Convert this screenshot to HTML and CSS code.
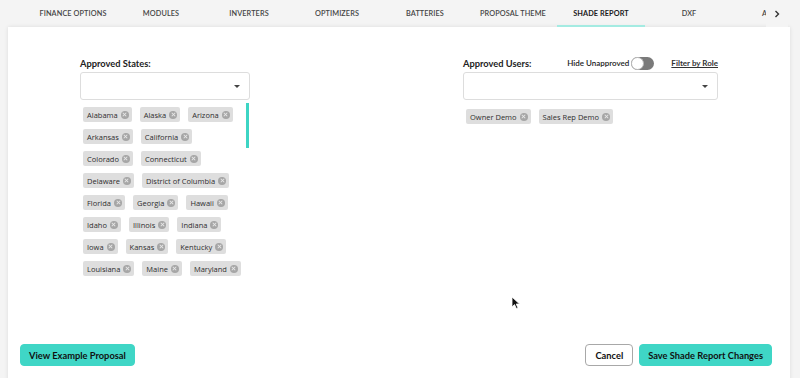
FILE: index.html
```html
<!DOCTYPE html>
<html>
<head>
<meta charset="utf-8">
<link rel="stylesheet" href="styles.css">
</head>
<body>
<nav class="tabs">
  <div class="tab">FINANCE OPTIONS</div>
  <div class="tab">MODULES</div>
  <div class="tab">INVERTERS</div>
  <div class="tab">OPTIMIZERS</div>
  <div class="tab">BATTERIES</div>
  <div class="tab">PROPOSAL THEME</div>
  <div class="tab active">SHADE REPORT</div>
  <div class="tab">DXF</div>
  <div class="tab clipped">APPS</div>
  <div class="tab-arrow"><svg width="8" height="8" viewBox="0 0 8 8"><path d="M2.5 1 L5.5 4 L2.5 7" fill="none" stroke="#333" stroke-width="1.4"/></svg></div>
</nav>
<main class="card">
  <section class="content">
    <div class="col">
      <div class="label-row"><span class="label">Approved States:</span></div>
      <div class="select"><span class="caret"></span></div>
      <div class="scroll-wrap">
        <div class="chips scroll">
          <span class="chip">Alabama<i class="x"></i></span>
          <span class="chip">Alaska<i class="x"></i></span>
          <span class="chip">Arizona<i class="x"></i></span>
          <span class="chip">Arkansas<i class="x"></i></span>
          <span class="chip">California<i class="x"></i></span>
          <span class="chip">Colorado<i class="x"></i></span>
          <span class="chip">Connecticut<i class="x"></i></span>
          <span class="chip">Delaware<i class="x"></i></span>
          <span class="chip">District of Columbia<i class="x"></i></span>
          <span class="chip">Florida<i class="x"></i></span>
          <span class="chip">Georgia<i class="x"></i></span>
          <span class="chip">Hawaii<i class="x"></i></span>
          <span class="chip">Idaho<i class="x"></i></span>
          <span class="chip">Illinois<i class="x"></i></span>
          <span class="chip">Indiana<i class="x"></i></span>
          <span class="chip">Iowa<i class="x"></i></span>
          <span class="chip">Kansas<i class="x"></i></span>
          <span class="chip">Kentucky<i class="x"></i></span>
          <span class="chip">Louisiana<i class="x"></i></span>
          <span class="chip">Maine<i class="x"></i></span>
          <span class="chip">Maryland<i class="x"></i></span>
          <span class="chip">Massachusetts<i class="x"></i></span>
          <span class="chip">Michigan<i class="x"></i></span>
          <span class="chip">Minnesota<i class="x"></i></span>
          <span class="chip">Mississippi<i class="x"></i></span>
          <span class="chip">Missouri<i class="x"></i></span>
          <span class="chip">Montana<i class="x"></i></span>
          <span class="chip">Nebraska<i class="x"></i></span>
          <span class="chip">Nevada<i class="x"></i></span>
          <span class="chip">New Hampshire<i class="x"></i></span>
          <span class="chip">New Jersey<i class="x"></i></span>
          <span class="chip">New Mexico<i class="x"></i></span>
          <span class="chip">New York<i class="x"></i></span>
          <span class="chip">North Carolina<i class="x"></i></span>
          <span class="chip">North Dakota<i class="x"></i></span>
          <span class="chip">Ohio<i class="x"></i></span>
          <span class="chip">Oklahoma<i class="x"></i></span>
          <span class="chip">Oregon<i class="x"></i></span>
          <span class="chip">Pennsylvania<i class="x"></i></span>
          <span class="chip">Rhode Island<i class="x"></i></span>
          <span class="chip">South Carolina<i class="x"></i></span>
          <span class="chip">South Dakota<i class="x"></i></span>
          <span class="chip">Tennessee<i class="x"></i></span>
          <span class="chip">Texas<i class="x"></i></span>
          <span class="chip">Utah<i class="x"></i></span>
          <span class="chip">Vermont<i class="x"></i></span>
          <span class="chip">Virginia<i class="x"></i></span>
          <span class="chip">Washington<i class="x"></i></span>
          <span class="chip">West Virginia<i class="x"></i></span>
          <span class="chip">Wisconsin<i class="x"></i></span>
          <span class="chip">Wyoming<i class="x"></i></span>
        </div>
        <span class="thumb"></span>
      </div>
    </div>
    <div class="spacer"></div>
    <div class="col">
      <div class="label-row">
        <span class="label">Approved Users:</span>
        <span class="hide">Hide Unapproved <span class="toggle"><span class="knob"></span></span></span>
        <a class="filter">Filter by Role</a>
      </div>
      <div class="select"><span class="caret"></span></div>
      <div class="chips users">
        <span class="chip">Owner Demo<i class="x"></i></span>
        <span class="chip">Sales Rep Demo<i class="x"></i></span>
      </div>
    </div>
  </section>
  <footer class="footer">
    <button class="btn primary">View Example Proposal</button>
    <div class="actions">
      <button class="btn outline">Cancel</button>
      <button class="btn primary">Save Shade Report Changes</button>
    </div>
  </footer>
</main>
<svg class="cursor" width="10" height="14" viewBox="0 0 10 14"><path d="M1 1 L1 11 L3.5 8.6 L5.4 12.6 L7 11.9 L5.2 8 L8.6 8 Z" fill="#111" stroke="#fff" stroke-width="0.8"/></svg>
</body>
</html>
```
FILE: styles.css
```css
* { box-sizing: border-box; }
html, body { margin: 0; padding: 0; }
body {
  width: 800px;
  height: 378px;
  overflow: hidden;
  background: #f4f4f4;
  font-family: "Lato", "Liberation Sans", sans-serif;
  color: #222;
  position: relative;
}
.tabs {
  display: flex;
  height: 27px;
  padding-left: 29px;
  align-items: stretch;
  overflow: hidden;
}
.tab {
  width: 88px;
  flex: none;
  display: flex;
  align-items: center;
  justify-content: center;
  font-size: 7.3px;
  font-weight: 600;
  color: #444;
  letter-spacing: 0.1px;
  border-bottom: 2px solid transparent;
  padding-top: 1px;
  white-space: nowrap;
}
.tab.active {
  color: #1a1a1a;
  font-weight: 700;
  border-bottom-color: #a4ebe2;
}
.tab.clipped {
  width: 33px;
  justify-content: flex-start;
  padding-left: 29px;
  overflow: hidden;
}
.tab-arrow {
  width: 22px;
  flex: none;
  display: flex;
  align-items: center;
  justify-content: center;
  background: #f4f4f4;
}
.card {
  margin: 0 10px 0 8px;
  height: 360px;
  background: #fff;
  box-shadow: 0 0 4px rgba(0,0,0,0.10);
  display: flex;
  flex-direction: column;
}
.content {
  display: grid;
  grid-template-columns: 170px 1fr 255px;
  padding: 28px 72px 0 72px;
}
.col { display: flex; flex-direction: column; }
.label-row {
  display: flex;
  align-items: center;
  height: 16px;
  margin-bottom: 1px;
}
.label {
  font-size: 9.3px;
  font-weight: 700;
  color: #222;
}
.hide {
  margin-left: auto;
  margin-right: 2px;
  font-size: 8px;
  font-weight: 600;
  display: flex;
  align-items: center;
  gap: 2px;
}
.toggle {
  width: 23px;
  height: 13px;
  border-radius: 7px;
  background: #7a7a7a;
  position: relative;
  display: inline-block;
}
.knob {
  position: absolute;
  left: 0;
  top: 0;
  width: 13px;
  height: 13px;
  border-radius: 50%;
  background: #fff;
  border: 1px solid #bbb;
}
.filter {
  margin-left: 15px;
  font-size: 8px;
  font-weight: 700;
  text-decoration: underline;
  color: #333;
}
.select {
  height: 28px;
  border: 1px solid #ddd;
  border-radius: 3px;
  position: relative;
}
.caret {
  position: absolute;
  right: 9px;
  top: 12px;
  border-left: 3px solid transparent;
  border-right: 3px solid transparent;
  border-top: 3px solid #444;
}
.scroll-wrap {
  position: relative;
  margin-top: 3px;
}
.thumb {
  position: absolute;
  right: 1px;
  top: 0;
  width: 3px;
  height: 45px;
  background: #3dd5c4;
}
.chips {
  display: flex;
  flex-wrap: wrap;
  align-content: flex-start;
  gap: 7px 8px;
  padding: 4px 6px 0 3px;
}
.chips.scroll {
  height: 177px;
  overflow: hidden;
}
.chips.users { margin-top: 5px; gap: 7px 8px; }
.chip {
  display: inline-flex;
  align-items: center;
  height: 15px;
  padding: 0 3px 0 4px;
  background: #dedede;
  border-radius: 2px;
  font-family: "Open Sans", "Liberation Sans", sans-serif;
  font-size: 7.5px;
  color: #2e2e2e;
  white-space: nowrap;
}
.x {
  width: 8px;
  height: 8px;
  border-radius: 50%;
  background: #a6a6a6;
  margin-left: 3px;
  position: relative;
  display: inline-block;
}
.x::before, .x::after {
  content: "";
  position: absolute;
  left: 1.5px;
  top: 3.5px;
  width: 5px;
  height: 1px;
  background: #e8e8e8;
  transform: rotate(45deg);
}
.x::after { transform: rotate(-45deg); }
.footer {
  margin-top: auto;
  display: flex;
  justify-content: space-between;
  align-items: center;
  padding: 0 18px 21px 12px;
}
.actions { display: flex; gap: 6px; }
.btn {
  height: 22px;
  border-radius: 4px;
  font-family: "Lato", "Liberation Sans", sans-serif;
  font-size: 9.3px;
  font-weight: 700;
  color: #111;
  padding: 0 8px;
  border: 1px solid transparent;
  white-space: nowrap;
}
.btn.primary { background: #3fd6c6; border-color: #3fd6c6; }
.btn.outline { background: #fff; border-color: #a8a8a8; padding: 0 9px; }
.cursor {
  position: absolute;
  left: 511px;
  top: 296px;
}
```
